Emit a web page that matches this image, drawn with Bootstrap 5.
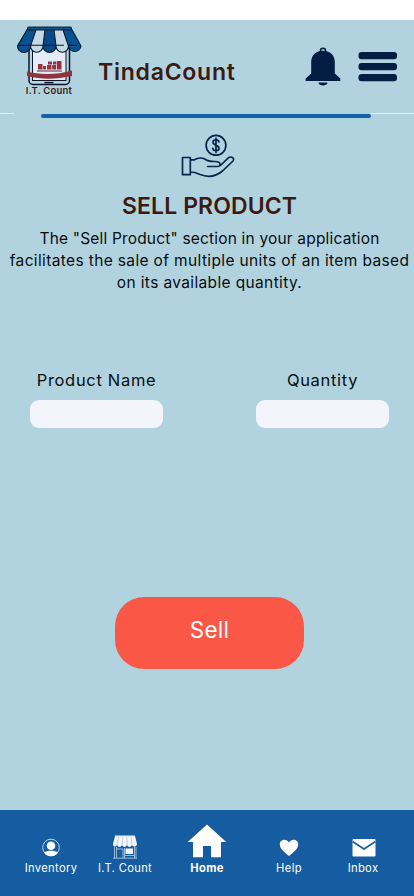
<!DOCTYPE html>
<html lang="en">
<head>
<meta charset="utf-8">
<meta name="viewport" content="width=device-width, initial-scale=1">
<title>TindaCount</title>
<link href="https://cdn.jsdelivr.net/npm/bootstrap@5.3.0/dist/css/bootstrap.min.css" rel="stylesheet">
<style>
body{font-family:Inter,"Liberation Sans",sans-serif;background:#b1d3df;color:#080d10;height:896px;overflow:hidden}
svg{display:block;flex-shrink:0}
.status-strip{height:20px;background:#fff}
.top-bar{height:93px;padding:5px 17px 0 15px}
.brand-logo{width:67px}
.logo-text{font-size:9.5px;line-height:12px;font-weight:600;color:#3c1a10;letter-spacing:.2px;margin-top:-2px;padding-left:1px}
.brand-name{font-size:23px;line-height:28px;font-weight:600;color:#3c1a10;letter-spacing:.76px;margin:33px 0 0 16px}
.rule{height:6px}
.rule-end{height:1px;background:#e3eff4}
.rule-main{width:330px;height:4px;border-radius:2px;background:#1660a8;margin:1px 0 0 27px}
.page-title{font-size:23px;line-height:28px;font-weight:600;color:#3c1a10;letter-spacing:.1px}
.intro{font-size:15.5px;line-height:22px;padding-left:5px}
.intro span{display:block;white-space:nowrap;letter-spacing:.36px}
.intro span:first-child{letter-spacing:.18px}
.fields{margin-top:74px;padding:0 25px 0 30px}
.field-box{width:133px}
.field-box label{font-size:16.500px;line-height:24px;margin-bottom:8px;letter-spacing:.68px}
.field-box input{height:28px;border:0;border-radius:9px;background:#f4f5fc}
.sell{width:189px;height:72px;border:0;border-radius:29px;background:#fa5746;color:#fff;font-size:22.5px;font-weight:400;letter-spacing:.3px;padding:0 0 7px;margin:169px 0 0 5px}
.sell:hover{background:#fa5746;color:#fff}
.bottom-bar{height:86px;background:#155da0;padding:0 13px 20px 14px}
.tab{width:74px;color:#fff;font-size:11.2px;line-height:16px;letter-spacing:.34px;text-decoration:none}
.tab.wide{width:90px}
</style>
<script src="https://cdn.jsdelivr.net/npm/bootstrap@5.3.0/dist/js/bootstrap.bundle.min.js"></script>
</head>
<body class="d-flex flex-column">
<div class="status-strip"></div>
<header class="top-bar d-flex align-items-start">
  <div class="brand-logo text-center">
    <svg width="67" height="62" viewBox="0 0 67 62">
      <rect x="14" y="14" width="40.500" height="45.500" rx="4" fill="#b9d5e1" stroke="#0b1728" stroke-width="1.500"/>
      <rect x="17.500" y="17" width="33.500" height="38.500" fill="#e2edf9" stroke="#0b1728"/>
      <path d="M29.500 57.600h9" stroke="#0b1728" stroke-width="1.500"/>
      <path d="M23 39h4.500v5.500H23zM28 41h3v3.500h-3zM32 40h4.500v4.500H32zM33 36.500h4v3h-4zM37.200 40h4v4.500h-4zM38 36.500h3.500v3H38zM42 36h4.500v8.500H42z" fill="#98323e"/>
      <path d="M22 46h25" stroke="#71252f" stroke-width="1"/>
      <path d="M12 46.500C24 50 42 50 57 45.500V51C42 54 28 55 12 51z" fill="#8f343d"/>
      <path d="M13 3 2.500 21a6.500 6.500 0 0 0 13 0L21.600 3z" fill="#075293"/>
      <path d="M21.600 3 15.500 21a6.200 6.200 0 0 0 12.500 0L30.200 3z" fill="#c4d8e6"/>
      <path d="M30.200 3 28 21a6.500 6.500 0 0 0 13 0L38.800 3z" fill="#064b87"/>
      <path d="M38.800 3 41 21a6.200 6.200 0 0 0 12.500 0L47.400 3z" fill="#c4d8e6"/>
      <path d="M47.400 3 53.500 21a6.300 6.300 0 0 0 12.500 0L56 3z" fill="#075293"/>
      <path d="M13 3 2.500 21a6.500 6.500 0 0 0 13 0L21.600 3M15.500 21a6.200 6.200 0 0 0 12.500 0L30.200 3M28 21a6.500 6.500 0 0 0 13 0L38.800 3M41 21a6.200 6.200 0 0 0 12.500 0L47.400 3M53.500 21a6.300 6.300 0 0 0 12.500 0L56 3M3 20.300h46M54 20.300h8" fill="none" stroke="#0b1728" stroke-width="1.100"/>
      <rect x="12.500" y="2" width="44" height="3" rx="1" fill="#08558f" stroke="#0b1728" stroke-width=".9"/>
    </svg>
    <div class="logo-text">I.T. Count</div>
  </div>
  <div class="brand-name">TindaCount</div>
  <div class="d-flex ms-auto" style="gap:17px;margin-top:22px">
    <svg width="36" height="40" viewBox="0 0 36 40" fill="#031d43">
      <path d="M15.500 5V3.700a2.500 2.500 0 0 1 5 0V5" fill="none" stroke="#031d43" stroke-width="1.600"/>
      <path d="M18 3.700C10 3.700 6.200 9 6.200 15v11.500L.7 31.500V34h34.600v-2.500l-5.500-5V15C29.800 9 26 3.700 18 3.700zM13.500 35.500h9c0 4-9 4-9 0z"/>
    </svg>
    <svg width="39" height="36" viewBox="0 0 39 36" fill="#031d43"><rect x=".5" y="5" width="38.500" height="7.300" rx="3"/><rect x=".5" y="16" width="38.500" height="7.300" rx="3"/><rect x=".5" y="27" width="38.500" height="7.300" rx="3"/></svg>
  </div>
</header>
<div class="rule d-flex align-items-start">
  <div class="rule-end" style="width:14px"></div>
  <div class="rule-main"></div>
  <div class="rule-end flex-grow-1"></div>
</div>
<main class="flex-grow-1 d-flex flex-column align-items-center">
  <svg width="56" height="46" viewBox="0 0 56 46" style="margin-top:15px" fill="none" stroke="#07264b" stroke-width="1.700" stroke-linecap="round" stroke-linejoin="round">
    <circle cx="37" cy="11.300" r="9.900"/>
    <path d="M40 8c-.5-3-6-3-6 .2 0 3.300 6 2.600 6 6 0 3.300-6 3.300-6.200.1M37 4v14.500"/>
    <path d="M3.500 23.500h7.800v17.200H3.500zM11.300 25.800h4c4-2.500 9-2.200 12.200.2 2.500 1.600 4.500 1.500 8.500 1.500 6.500 0 6 5 2.500 5h-10M41.500 31.500l7.500-7.300c3-2.500 7-.5 5 2.800L43.500 37c-7 6-15 6.500-23 3.300-3-1.400-5-2.300-9.200-2.300"/>
  </svg>
  <h1 class="page-title mb-0" style="margin:12px 0 0 5px">SELL PRODUCT</h1>
  <p class="intro text-center mb-0" style="margin-top:8px">
    <span>The "Sell Product" section in your application</span>
    <span>facilitates the sale of multiple units of an item based</span>
    <span>on its available quantity.</span>
  </p>
  <form class="fields w-100 d-flex justify-content-between">
    <div class="field-box text-center"><label for="product">Product Name</label><input id="product" class="form-control"></div>
    <div class="field-box text-center"><label for="quantity">Quantity</label><input id="quantity" class="form-control"></div>
  </form>
  <button class="btn sell" type="button">Sell</button>
</main>
<nav class="bottom-bar d-flex align-items-end">
  <a class="tab d-flex flex-column align-items-center" href="#">
    <svg width="20" height="20" viewBox="0 0 20 20" style="margin-bottom:2px"><circle cx="10" cy="9.500" r="8.300" fill="none" stroke="#b9d3ea"/><circle cx="10" cy="7.800" r="4.300" fill="#fff"/><path d="M3 14.500c3-2.500 11-2.500 14 0-3 5-11 5-14 0z" fill="#fff"/></svg>
    <span>Inventory</span>
  </a>
  <a class="tab d-flex flex-column align-items-center" href="#">
    <svg width="26" height="24" viewBox="0 0 26 24" style="margin-bottom:1px"><path d="M3 1h20l2 8c0 3-4 3.500-5 1-1 2.500-4 2.500-5 0-1 2.500-4 2.500-5 0-1 2.500-4 2.500-5 0-1 2.500-4 2-4-1z" fill="#f4f6fc"/><path d="M6.500 2 5 10M11 2l-1 8M15 2v8M19 2l1 8" stroke="#a7bdd5" stroke-width=".7"/><path d="M3 .9h20" stroke="#c6d9ea"/><path d="M2.500 12v11M4.500 12v11M5 14h6v9M12.500 13v10M22.500 12v11M24 12v11M1 23.200h24M13 20.500h9" fill="none" stroke="#a9c5df" stroke-width=".9"/><path d="M13.500 13.500h7.500v5.500h-7.500z" fill="#f4f6fc"/></svg>
    <span>I.T. Count</span>
  </a>
  <a class="tab wide d-flex flex-column align-items-center fw-bold" href="#">
    <svg width="40" height="34" viewBox="0 0 40 34" style="margin-bottom:2px" fill="#fff"><path d="M20 .5 39.300 18H34v15.200H24V22h-8v11.200H6V18H.7z"/></svg>
    <span>Home</span>
  </a>
  <a class="tab d-flex flex-column align-items-center" href="#">
    <svg width="20" height="18" viewBox="0 0 20 18" style="margin-bottom:3px" fill="#fff"><path d="M10 17C6 13.500.8 10.500.8 5.300.8.500 7.500-1 10 3.700 12.500-1 19.200.5 19.200 5.300 19.200 10.500 14 13.500 10 17z"/></svg>
    <span>Help</span>
  </a>
  <a class="tab d-flex flex-column align-items-center" href="#">
    <svg width="24" height="18" viewBox="0 0 24 18" style="margin:0 0 3px 1px"><rect x=".5" width="23" height="17.500" rx="1" fill="#fff"/><path d="m.5 2.500 11.500 7.500 11.500-7.500" fill="none" stroke="#155da0" stroke-width="1.500"/></svg>
    <span>Inbox</span>
  </a>
</nav>
</body>
</html>
